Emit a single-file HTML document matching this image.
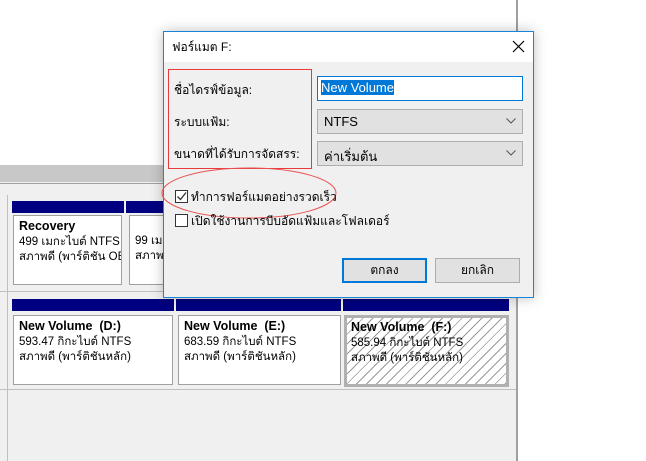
<!DOCTYPE html>
<html><head><meta charset="utf-8"><style>
*{margin:0;padding:0;box-sizing:border-box}
body{width:646px;height:461px;position:relative;overflow:hidden;background:#fff;font-family:"Liberation Sans","Noto Sans CJK SC",sans-serif;font-size:12px;color:#000}
.a{position:absolute}
.hdr{background:#000080;height:12px}
.box{position:absolute;background:#fff;border:1px solid #a0a0a0;padding:3px 5px;line-height:15px;font-size:11.5px;white-space:nowrap;overflow:hidden}
.box b{font-size:12.5px}
.lbl{position:absolute;left:174px;font-size:12px}
.combo{position:absolute;left:317px;width:206px;height:25px;background:#e1e1e1;border:1px solid #adadad;padding:4px 6px;font-size:13px}
.combo svg{position:absolute;right:6px;top:8px}
.cb{position:absolute;left:175px;width:13px;height:13px;border:1px solid #333;background:#fff}
.btn{position:absolute;top:258px;width:85px;height:25px;background:#e1e1e1;border:1px solid #adadad;text-align:center;line-height:22px;font-size:12px}
</style></head><body>
<div class="a" style="left:516px;top:0;width:2px;height:461px;background:#a0a0a0"></div>
<div class="a" style="left:0;top:165px;width:516px;height:17px;background:#c8c8c8"></div>
<div class="a" style="left:0;top:182px;width:516px;height:279px;background:#f0f0f0"></div>
<div class="a" style="left:0;top:183px;width:516px;height:1px;background:#a0a0a0"></div>
<div class="a" style="left:7px;top:195px;width:1px;height:266px;background:#c0c0c0"></div>
<div class="a" style="left:0;top:291px;width:516px;height:1px;background:#c0c0c0"></div>
<div class="a" style="left:0;top:389px;width:516px;height:1px;background:#c0c0c0"></div>
<div class="a hdr" style="left:12px;top:201px;width:112px"></div>
<div class="a hdr" style="left:126px;top:201px;width:60px"></div>
<div class="box" style="left:13px;top:215px;width:109px;height:70px"><b>Recovery</b><br>499 เมกะไบต์ NTFS<br>สภาพดี (พาร์ติชัน OE</div>
<div class="box" style="left:129px;top:215px;width:60px;height:70px"><br>99 เมกะ<br>สภาพดี</div>
<div class="a hdr" style="left:12px;top:299px;width:162px"></div>
<div class="a hdr" style="left:176px;top:299px;width:165px"></div>
<div class="a hdr" style="left:343px;top:299px;width:166px"></div>
<div class="box" style="left:13px;top:315px;width:160px;height:70px"><b>New Volume &nbsp;(D:)</b><br>593.47 กิกะไบต์ NTFS<br>สภาพดี (พาร์ติชันหลัก)</div>
<div class="box" style="left:178px;top:315px;width:163px;height:70px"><b>New Volume &nbsp;(E:)</b><br>683.59 กิกะไบต์ NTFS<br>สภาพดี (พาร์ติชันหลัก)</div>
<div class="box" style="left:344px;top:315px;width:165px;height:72px;border:3px solid #b0b0b0;padding:2px 4px;background:repeating-linear-gradient(135deg,#fff 0 4px,#999 4px 5px,#fff 5px 7px)"><b>New Volume &nbsp;(F:)</b><br>585.94 กิกะไบต์ NTFS<br>สภาพดี (พาร์ติชันหลัก)</div>
<div class="a" style="left:163px;top:31px;width:371px;height:267px;background:#f0f0f0;border:1px solid #1883d7;box-shadow:0 0 12px rgba(0,0,0,.25)"></div>
<div class="a" style="left:164px;top:32px;width:369px;height:30px;background:#fff"></div>
<div class="a" style="left:172px;top:38px;font-size:12px">ฟอร์แมต F:</div>
<svg class="a" style="left:512px;top:40px" width="13" height="13"><path d="M1 1L12 12M12 1L1 12" stroke="#000" stroke-width="1.2"/></svg>
<div class="a" style="left:168px;top:69px;width:144px;height:100px;border:1px solid #e83a3a"></div>
<div class="lbl" style="top:81px">ชื่อไดรฟ์ข้อมูล:</div>
<div class="lbl" style="top:113px">ระบบแฟ้ม:</div>
<div class="lbl" style="top:145px">ขนาดที่ได้รับการจัดสรร:</div>
<div class="a" style="left:317px;top:76px;width:206px;height:25px;background:#fff;border:1px solid #0078d7;padding:3px 3px;font-size:13px"><span style="background:#0078d7;color:#fff">New Volume</span></div>
<div class="combo" style="top:109px">NTFS<svg width="10" height="6"><path d="M0.5 0.5L5 5L9.5 0.5" fill="none" stroke="#555"/></svg></div>
<div class="combo" style="top:141px">ค่าเริ่มต้น<svg width="10" height="6"><path d="M0.5 0.5L5 5L9.5 0.5" fill="none" stroke="#555"/></svg></div>
<svg class="a" style="left:160px;top:166px" width="180" height="54"><ellipse cx="89" cy="27" rx="87" ry="25" fill="none" stroke="#e85050" stroke-width="1"/></svg>
<div class="cb" style="top:190px"><svg width="11" height="11" style="position:absolute;left:0;top:0"><path d="M1.5 5.5L4.5 8.5L10 1.5" fill="none" stroke="#333" stroke-width="1.3"/></svg></div>
<div class="a" style="left:191px;top:188px">ทำการฟอร์แมตอย่างรวดเร็ว</div>
<div class="cb" style="top:214px"></div>
<div class="a" style="left:191px;top:212px">เปิดใช้งานการบีบอัดแฟ้มและโฟลเดอร์</div>
<div class="btn" style="left:342px;border:2px solid #0078d7;line-height:21px">ตกลง</div>
<div class="btn" style="left:435px">ยกเลิก</div>
</body></html>
